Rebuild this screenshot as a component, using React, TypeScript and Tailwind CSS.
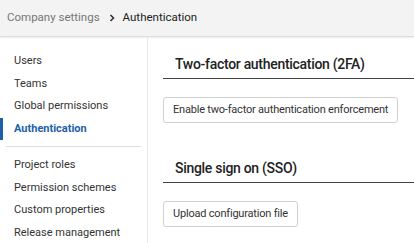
import React from 'react';

const NAV_TOP = ['Users', 'Teams', 'Global permissions', 'Authentication'];
const NAV_BOTTOM = ['Project roles', 'Permission schemes', 'Custom properties', 'Release management'];

const NavItem: React.FC<{ label: string; active?: boolean }> = ({ label, active }) => (
  <div className="relative h-[22.5px] flex items-center pl-[14px] whitespace-nowrap">
    {active && <span className="absolute left-0 top-0 h-full w-[3px] bg-[#1e5fa8]" />}
    <span className={active ? 'font-bold text-[#1e5fa8]' : 'text-[#333]'}>{label}</span>
  </div>
);

const Section: React.FC<{ title: string; button: string }> = ({ title, button }) => (
  <div>
    <h2 className="border-b border-[#444] pl-[12px] pb-[4px] text-[14px] font-medium tracking-[-0.3px] text-[#222] leading-[20px]">{title}</h2>
    <button className="mt-[18px] h-[26px] px-[9px] whitespace-nowrap border border-[#d0d0d0] rounded-[3px] bg-white text-[11px] tracking-[-0.2px] text-[#333]">{button}</button>
  </div>
);

export default function App() {
  return (
    <div className="w-[414px] h-[243px] overflow-hidden bg-white text-[11px]" style={{ fontFamily: 'Roboto, "Liberation Sans", sans-serif' }}>
      <div className="h-[37px] bg-[#f3f3f3] border-b border-[#dcdcdc] shadow-[0_1px_2px_rgba(0,0,0,0.08)] flex items-center pl-[7px] text-[11.5px]">
        <span className="text-[#777]">Company settings</span>
        <svg className="ml-[8px] mr-[7px] w-[8px] h-[8px] text-[#333]" viewBox="0 0 8 8" fill="none" stroke="currentColor" strokeWidth="1.6"><path d="M2.5 1l3 3-3 3" /></svg>
        <span className="text-[#222]">Authentication</span>
      </div>
      <div className="flex h-[206px]">
        <div className="w-[148px] shrink-0 border-r border-[#e8e8e8] pt-[13px]">
          {NAV_TOP.map(l => <NavItem key={l} label={l} active={l === 'Authentication'} />)}
          <div className="mx-[6px] mt-[6px] mb-[7px] border-t border-[#ddd]" />
          {NAV_BOTTOM.map(l => <NavItem key={l} label={l} />)}
        </div>
        <div className="flex-1 min-w-0 pl-[15px] pt-[17px] flex flex-col gap-[35px]">
          <Section title="Two-factor authentication (2FA)" button="Enable two-factor authentication enforcement" />
          <Section title="Single sign on (SSO)" button="Upload configuration file" />
        </div>
      </div>
    </div>
  );
}
